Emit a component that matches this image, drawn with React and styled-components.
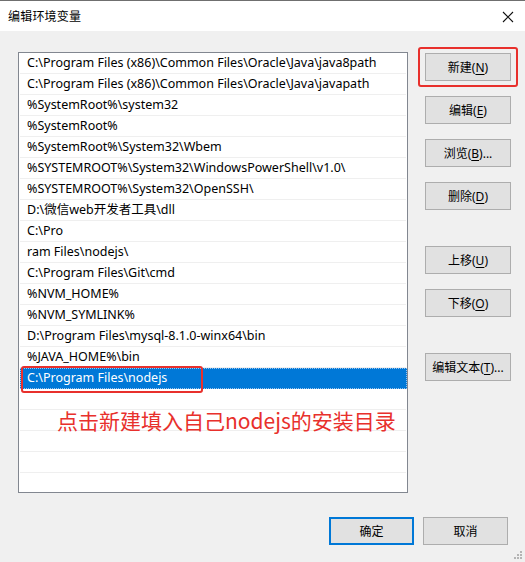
import React from "react";
import styled, { createGlobalStyle } from "styled-components";

const GlobalStyle = createGlobalStyle`
  html, body {
    margin: 0;
    padding: 0;
    background: #f0f0f0;
  }
  body {
    font-family: "Segoe UI", "Noto Sans", "Noto Sans CJK SC", sans-serif;
    font-size: 12px;
    color: #000;
  }
`;

const paths = [
  "C:\\Program Files (x86)\\Common Files\\Oracle\\Java\\java8path",
  "C:\\Program Files (x86)\\Common Files\\Oracle\\Java\\javapath",
  "%SystemRoot%\\system32",
  "%SystemRoot%",
  "%SystemRoot%\\System32\\Wbem",
  "%SYSTEMROOT%\\System32\\WindowsPowerShell\\v1.0\\",
  "%SYSTEMROOT%\\System32\\OpenSSH\\",
  "D:\\微信web开发者工具\\dll",
  "C:\\Pro",
  "ram Files\\nodejs\\",
  "C:\\Program Files\\Git\\cmd",
  "%NVM_HOME%",
  "%NVM_SYMLINK%",
  "D:\\Program Files\\mysql-8.1.0-winx64\\bin",
  "%JAVA_HOME%\\bin",
  "C:\\Program Files\\nodejs",
  "",
  "",
  "",
  "",
  "",
];

const SELECTED = 15;

function App() {
  return (
    <>
      <GlobalStyle />
      <Window>
        <TitleBar>
          <Title>编辑环境变量</Title>
          <CloseIcon width="12" height="12" viewBox="0 0 12 12">
            <path d="M1 1 L11 11 M11 1 L1 11" stroke="#111" strokeWidth="1.1" fill="none" />
          </CloseIcon>
        </TitleBar>
        <Body>
          <Main>
            <ListBox>
              {paths.map((p, i) => (
                <Row key={i} $selected={i === SELECTED}>
                  {p}
                </Row>
              ))}
              <Highlight $left={2} $top={313} $width={182} $height={27} />
              <Note>点击新建填入自己nodejs的安装目录</Note>
            </ListBox>
            <ButtonColumn>
              <ButtonGroup>
                <Marked>
                  <Button>
                    新建(<u>N</u>)
                  </Button>
                </Marked>
                <Button>
                  编辑(<u>E</u>)
                </Button>
                <Button>
                  浏览(<u>B</u>)...
                </Button>
                <Button>
                  删除(<u>D</u>)
                </Button>
              </ButtonGroup>
              <ButtonGroup $top={36}>
                <Button>
                  上移(<u>U</u>)
                </Button>
                <Button>
                  下移(<u>O</u>)
                </Button>
              </ButtonGroup>
              <ButtonGroup $top={36}>
                <Button>
                  编辑文本(<u>T</u>)...
                </Button>
              </ButtonGroup>
            </ButtonColumn>
          </Main>
          <Footer>
            <Button $primary $width={85}>
              确定
            </Button>
            <Button $width={85}>取消</Button>
          </Footer>
        </Body>
        <Grip width="10" height="10" viewBox="0 0 10 10">
          <rect x="7" y="1" width="2" height="2" fill="#b4b4b4" />
          <rect x="4" y="4" width="2" height="2" fill="#b4b4b4" />
          <rect x="7" y="4" width="2" height="2" fill="#b4b4b4" />
          <rect x="1" y="7" width="2" height="2" fill="#b4b4b4" />
          <rect x="4" y="7" width="2" height="2" fill="#b4b4b4" />
          <rect x="7" y="7" width="2" height="2" fill="#b4b4b4" />
        </Grip>
      </Window>
    </>
  );
}

export default App;

const Window = styled.div`
  position: relative;
  width: 525px;
  height: 562px;
  box-sizing: border-box;
  border-top: 1px solid #6f6f6f;
  display: flex;
  flex-direction: column;
  background: #f0f0f0;
  overflow: hidden;
`;

const TitleBar = styled.div`
  height: 30px;
  flex-shrink: 0;
  background: #fff;
  display: flex;
  align-items: center;
  justify-content: space-between;
  padding: 0 11px 0 8px;
`;

const Title = styled.span`
  font-size: 12px;
  letter-spacing: 0.2px;
`;

const CloseIcon = styled.svg`
  display: block;
  margin-top: 1px;
`;

const Body = styled.div`
  flex: 1;
  display: flex;
  flex-direction: column;
  padding: 21px 14px 0 18px;
`;

const Main = styled.div`
  display: flex;
  gap: 17px;
`;

const ListBox = styled.div`
  position: relative;
  flex-shrink: 0;
  width: 390px;
  height: 441px;
  box-sizing: border-box;
  border: 1px solid #828790;
  background: #fff;
  overflow: hidden;
`;

const Row = styled.div`
  height: 21px;
  box-sizing: border-box;
  padding-left: 7px;
  line-height: 20px;
  font-size: 12.5px;
  white-space: nowrap;
  border-bottom: 1px solid ${(p) => (p.$selected ? "#0078d7" : "#efefef")};
  margin: ${(p) => (p.$selected ? "0 0 0 1px" : "0 1px")};
  background: ${(p) => (p.$selected ? "#0078d7" : "transparent")};
  color: ${(p) => (p.$selected ? "#fff" : "#000")};
  outline: ${(p) => (p.$selected ? "1px dotted #9ac4ee" : "none")};
  outline-offset: -1px;
`;

const Highlight = styled.div`
  position: absolute;
  left: ${(p) => p.$left}px;
  top: ${(p) => p.$top}px;
  width: ${(p) => p.$width}px;
  height: ${(p) => p.$height}px;
  box-sizing: border-box;
  border: 2px solid #e8302c;
  border-radius: 3px;
  pointer-events: none;
`;

const Note = styled.div`
  position: absolute;
  left: 38px;
  top: 352px;
  font-family: "Microsoft YaHei", "Noto Sans CJK SC", sans-serif;
  font-size: 21px;
  color: #e8302c;
  white-space: nowrap;
`;

const ButtonColumn = styled.div`
  display: flex;
  flex-direction: column;
  padding-top: 1px;
`;

const ButtonGroup = styled.div`
  display: flex;
  flex-direction: column;
  gap: 15px;
  margin-top: ${(p) => p.$top || 0}px;
`;

const Marked = styled.div`
  margin: -6px -7px;
  padding: 4px 5px;
  border: 2px solid #e8302c;
  border-radius: 3px;
`;

const Button = styled.div`
  width: ${(p) => p.$width || 86}px;
  height: 28px;
  flex-shrink: 0;
  box-sizing: border-box;
  border: ${(p) => (p.$primary ? "2px solid #0078d7" : "1px solid #adadad")};
  background: #e1e1e1;
  display: flex;
  align-items: center;
  justify-content: center;
  font-size: 12px;
  white-space: nowrap;

  u {
    text-underline-offset: 2px;
  }
`;

const Footer = styled.div`
  display: flex;
  justify-content: flex-end;
  gap: 9px;
  margin-top: 24px;
  margin-right: 3px;
`;

const Grip = styled.svg`
  position: absolute;
  right: 2px;
  bottom: 2px;
`;
